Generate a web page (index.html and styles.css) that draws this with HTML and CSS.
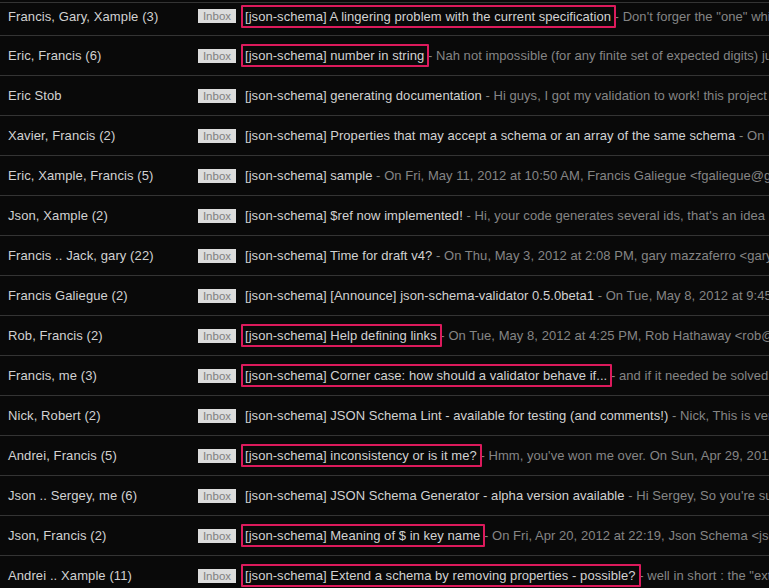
FILE: index.html
```html
<!DOCTYPE html>
<html>
<head>
<meta charset="utf-8">
<link rel="stylesheet" href="styles.css">
</head>
<body>
<div class="list">
  <div class="row first"><span class="sender">Francis, Gary, Xample (3)</span><span class="label">Inbox</span><span class="line"><span class="subject marked">[json-schema] A lingering problem with the current specification</span><span class="snippet"> - Don't forger the "one" which was the subject of a long thread</span></span></div>
  <div class="row"><span class="sender">Eric, Francis (6)</span><span class="label">Inbox</span><span class="line"><span class="subject marked">[json-schema] number in string</span><span class="snippet"> - Nah not impossible (for any finite set of expected digits) just very long</span></span></div>
  <div class="row"><span class="sender">Eric Stob</span><span class="label">Inbox</span><span class="line"><span class="subject">[json-schema] generating documentation</span><span class="snippet"> - Hi guys, I got my validation to work! this project is very nice</span></span></div>
  <div class="row"><span class="sender">Xavier, Francis (2)</span><span class="label">Inbox</span><span class="line"><span class="subject">[json-schema] Properties that may accept a schema or an array of the same schema</span><span class="snippet"> - On Fri, May 11, 2012</span></span></div>
  <div class="row"><span class="sender">Eric, Xample, Francis (5)</span><span class="label">Inbox</span><span class="line"><span class="subject">[json-schema] sample</span><span class="snippet"> - On Fri, May 11, 2012 at 10:50 AM, Francis Galiegue &lt;fgaliegue@gmail.com&gt;</span></span></div>
  <div class="row"><span class="sender">Json, Xample (2)</span><span class="label">Inbox</span><span class="line"><span class="subject">[json-schema] $ref now implemented!</span><span class="snippet"> - Hi, your code generates several ids, that's an idea I had too</span></span></div>
  <div class="row"><span class="sender">Francis .. Jack, gary (22)</span><span class="label">Inbox</span><span class="line"><span class="subject">[json-schema] Time for draft v4?</span><span class="snippet"> - On Thu, May 3, 2012 at 2:08 PM, gary mazzaferro &lt;gary@example.com&gt;</span></span></div>
  <div class="row"><span class="sender">Francis Galiegue (2)</span><span class="label">Inbox</span><span class="line"><span class="subject">[json-schema] [Announce] json-schema-validator 0.5.0beta1</span><span class="snippet"> - On Tue, May 8, 2012 at 9:45 PM</span></span></div>
  <div class="row"><span class="sender">Rob, Francis (2)</span><span class="label">Inbox</span><span class="line"><span class="subject marked">[json-schema] Help defining links</span><span class="snippet"> - On Tue, May 8, 2012 at 4:25 PM, Rob Hathaway &lt;rob@example.com&gt;</span></span></div>
  <div class="row"><span class="sender">Francis, me (3)</span><span class="label">Inbox</span><span class="line"><span class="subject marked">[json-schema] Corner case: how should a validator behave if...</span><span class="snippet"> - and if it needed be solved at all</span></span></div>
  <div class="row"><span class="sender">Nick, Robert (2)</span><span class="label">Inbox</span><span class="line"><span class="subject">[json-schema] JSON Schema Lint - available for testing (and comments!)</span><span class="snippet"> - Nick, This is very nice</span></span></div>
  <div class="row"><span class="sender">Andrei, Francis (5)</span><span class="label">Inbox</span><span class="line"><span class="subject marked">[json-schema] inconsistency or is it me?</span><span class="snippet"> - Hmm, you've won me over. On Sun, Apr 29, 2012</span></span></div>
  <div class="row"><span class="sender">Json .. Sergey, me (6)</span><span class="label">Inbox</span><span class="line"><span class="subject">[json-schema] JSON Schema Generator - alpha version available</span><span class="snippet"> - Hi Sergey, So you're suggesting</span></span></div>
  <div class="row"><span class="sender">Json, Francis (2)</span><span class="label">Inbox</span><span class="line"><span class="subject marked">[json-schema] Meaning of $ in key name</span><span class="snippet"> - On Fri, Apr 20, 2012 at 22:19, Json Schema &lt;json-schema@example.com&gt;</span></span></div>
  <div class="row"><span class="sender">Andrei .. Xample (11)</span><span class="label">Inbox</span><span class="line"><span class="subject marked">[json-schema] Extend a schema by removing properties - possible?</span><span class="snippet"> - well in short : the "extends" keyword</span></span></div>
</div>
</body>
</html>
```

FILE: styles.css
```css
html, body {
  margin: 0;
  padding: 0;
  background: #090909;
  overflow: hidden;
}
body {
  font-family: "Liberation Sans", Arial, Helvetica, sans-serif;
  font-size: 13px;
  letter-spacing: 0.05px;
  color: #cfcfcf;
}
.list {
  margin-top: 2px;
  border-top: 1px solid #343434;
}
.row {
  display: flex;
  align-items: center;
  height: 39px;
  border-bottom: 1px solid #343434;
  white-space: nowrap;
  overflow: hidden;
}
.row.first {
  box-sizing: border-box;
  height: 33px;
  padding-bottom: 6px;
}
.sender {
  flex: 0 0 190px;
  padding-left: 8px;
  color: #d2d2d2;
  line-height: 15px;
  letter-spacing: 0.1px;
}
.label {
  flex: 0 0 auto;
  box-sizing: border-box;
  width: 38px;
  height: 14px;
  line-height: 14px;
  text-align: center;
  background: #dcdcdc;
  color: #808080;
  font-size: 11.5px;
  letter-spacing: 0;
  margin-right: 9px;
}
.line {
  flex: 1 1 auto;
  overflow: visible;
  line-height: 15px;
}
.subject {
  position: relative;
  color: #d2d2d2;
}
.subject.marked::after {
  content: "";
  position: absolute;
  left: -4px;
  right: -5px;
  top: -4px;
  bottom: -4px;
  border: 2px solid #dc1a5c;
  border-radius: 1px;
}
.snippet {
  color: #858585;
}
```
